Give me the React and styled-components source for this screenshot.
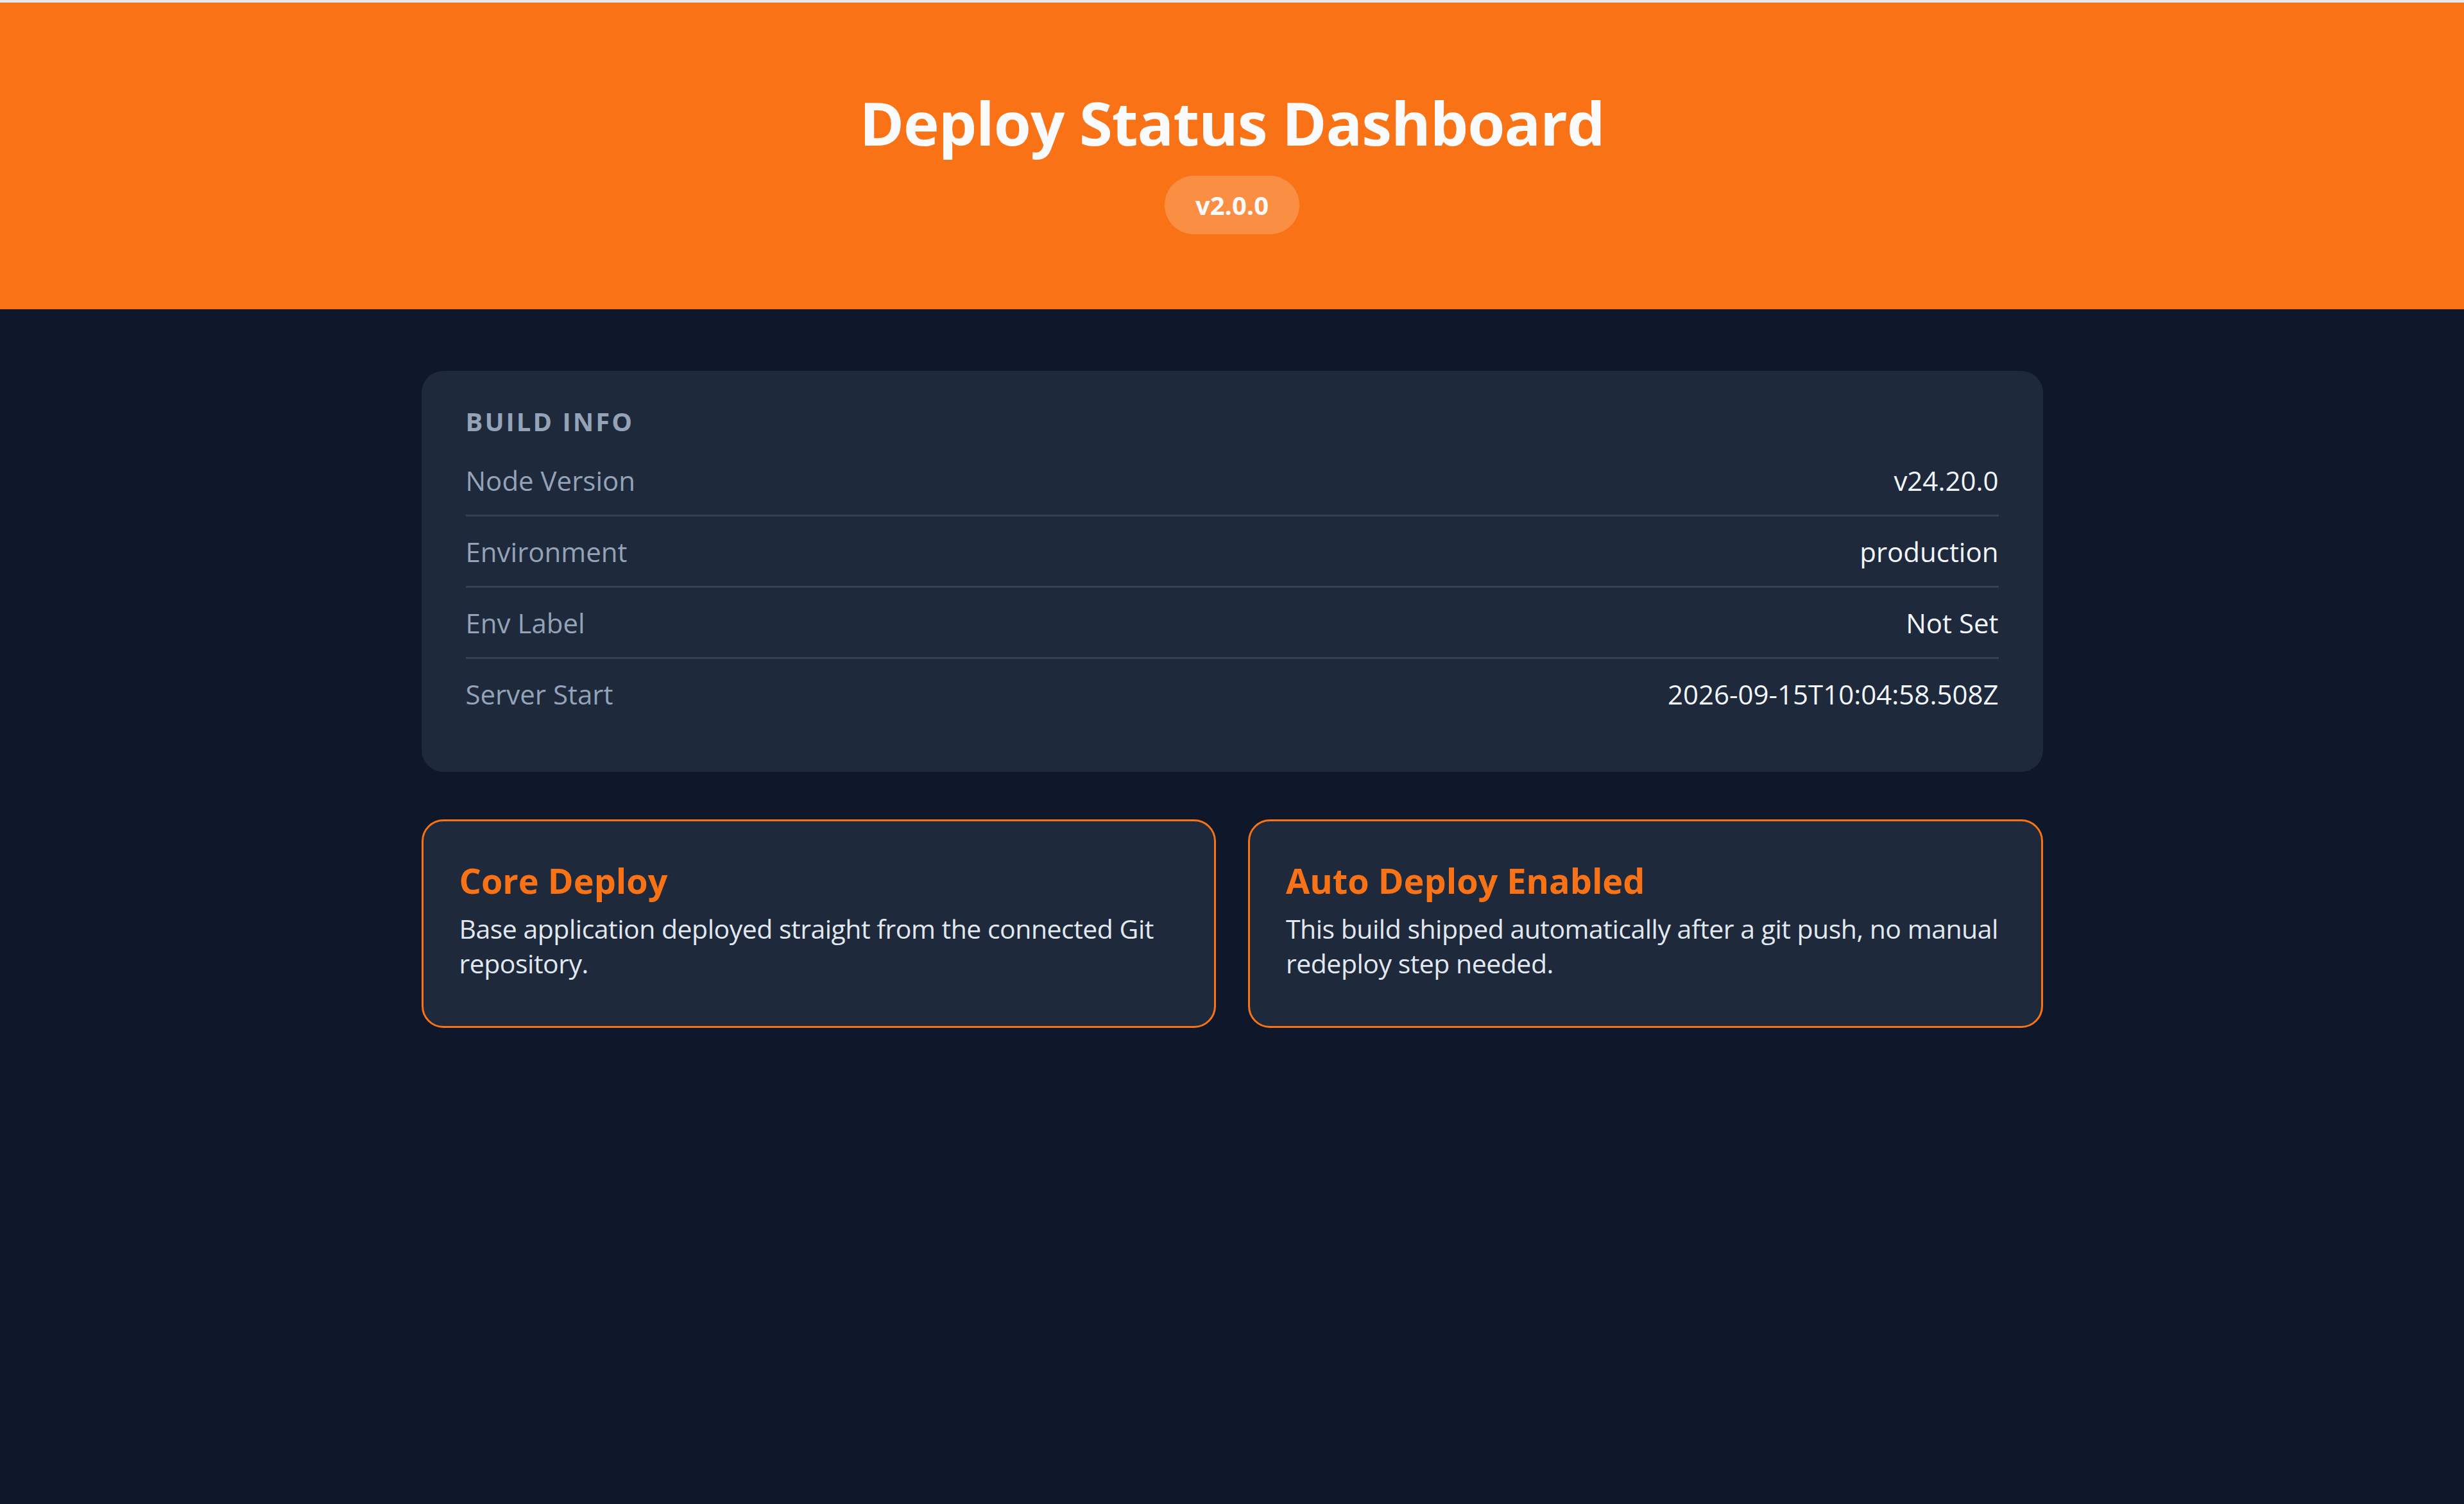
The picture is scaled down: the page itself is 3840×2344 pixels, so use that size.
import React from "react";
import styled, { createGlobalStyle } from "styled-components";

const Global = createGlobalStyle`
  html, body { margin: 0; padding: 0; background: #0f172a; }
  body { font-family: "Open Sans", "Noto Sans", sans-serif; min-height: 2344px; border-top: 4px solid #e5e7eb; box-sizing: border-box; }
`;

const Header = styled.header`
  background: #f97316;
  height: 478px;
  box-sizing: border-box;
  padding-top: 130px;
  display: flex;
  flex-direction: column;
  align-items: center;
`;
const Title = styled.h1`
  margin: 0;
  color: #f8fafc;
  font-size: 94px;
  line-height: 115px;
  font-weight: 700;
  letter-spacing: -1px;
`;
const Badge = styled.span`
  margin-top: 25px;
  height: 91px;
  padding: 0 48px;
  border-radius: 46px;
  background: rgba(255, 255, 255, 0.2);
  color: #f8fafc;
  font-size: 40px;
  font-weight: 700;
  display: flex;
  align-items: center;
`;
const Main = styled.main`
  width: 2527px;
  margin: 96px auto 0;
  display: flex;
  flex-direction: column;
  gap: 74px;
`;
const InfoCard = styled.section`
  background: #1e293b;
  border-radius: 34px;
  padding: 52px 69px 68px;
`;
const SectionTitle = styled.h2`
  margin: 0 0 10px;
  color: #94a3b8;
  font-size: 40px;
  font-weight: 700;
  letter-spacing: 3px;
  text-transform: uppercase;
  line-height: 54px;
`;
const Row = styled.div`
  display: flex;
  justify-content: space-between;
  align-items: center;
  height: 108px;
  font-size: 42px;
  border-bottom: ${(p) => (p.last ? "none" : "3px solid #334155")};
`;
const Label = styled.span` color: #94a3b8; `;
const Value = styled.span` color: #f1f5f9; `;
const Grid = styled.div`
  display: grid;
  grid-template-columns: 1fr 1fr;
  gap: 50px;
`;
const Feature = styled.div`
  border: 3px solid #f97316;
  border-radius: 34px;
  background: #1e293b;
  padding: 60px 56px 58px;
  min-height: 325px;
  box-sizing: border-box;
`;
const FTitle = styled.h3`
  margin: 0 0 16px;
  color: #f97316;
  font-size: 54px;
  font-weight: 700;
  line-height: 64px;
`;
const FText = styled.p`
  margin: 0;
  color: #e2e8f0;
  font-size: 41px;
  line-height: 54px;
  letter-spacing: -0.5px;
`;

const rows = [
  ["Node Version", "v24.20.0"],
  ["Environment", "production"],
  ["Env Label", "Not Set"],
  ["Server Start", "2026-09-15T10:04:58.508Z"],
];

export default function App() {
  return (
    <>
      <Global />
      <Header>
        <Title>Deploy Status Dashboard</Title>
        <Badge>v2.0.0</Badge>
      </Header>
      <Main>
        <InfoCard>
          <SectionTitle>Build Info</SectionTitle>
          {rows.map(([l, v], i) => (
            <Row key={l} last={i === rows.length - 1}>
              <Label>{l}</Label>
              <Value>{v}</Value>
            </Row>
          ))}
        </InfoCard>
        <Grid>
          <Feature>
            <FTitle>Core Deploy</FTitle>
            <FText>Base application deployed straight from the connected Git repository.</FText>
          </Feature>
          <Feature>
            <FTitle>Auto Deploy Enabled</FTitle>
            <FText>This build shipped automatically after a git push, no manual redeploy step needed.</FText>
          </Feature>
        </Grid>
      </Main>
    </>
  );
}
